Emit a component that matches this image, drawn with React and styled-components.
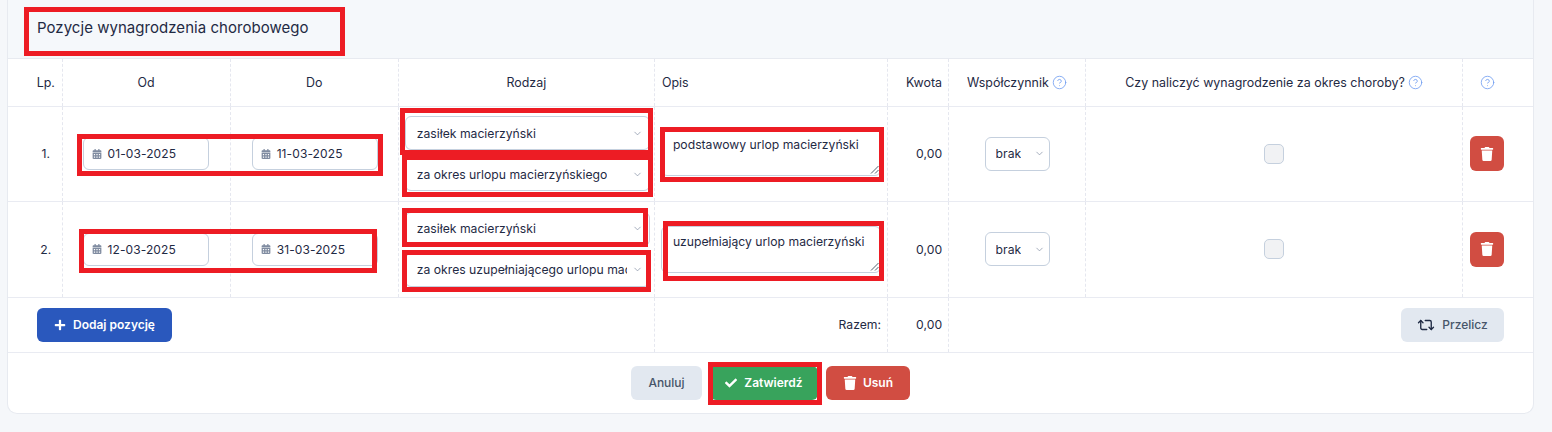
import React from 'react';
import styled, { createGlobalStyle } from 'styled-components';
import { FaCalendarAlt, FaTrash, FaCheck, FaPlus } from 'react-icons/fa';
import { ChevronDown, CircleHelp, Repeat2 } from 'lucide-react';

const GlobalStyle = createGlobalStyle`
	html, body {
		margin: 0;
		padding: 0;
		background: #f5f7fa;
		font-family: Inter, 'Liberation Sans', sans-serif;
		color: #1f2a44;
	}
	* {
		box-sizing: border-box;
	}
`;

const rows = [
	{
		lp: '1.',
		from: '01-03-2025',
		to: '11-03-2025',
		kind: 'zasiłek macierzyński',
		period: 'za okres urlopu macierzyńskiego',
		note: 'podstawowy urlop macierzyński',
		height: 95,
		notePad: '0 6px 2px',
	},
	{
		lp: '2.',
		from: '12-03-2025',
		to: '31-03-2025',
		kind: 'zasiłek macierzyński',
		period: 'za okres uzupełniającego urlopu macierzyńskiego',
		note: 'uzupełniający urlop macierzyński',
		height: 96,
		notePad: '1px 6px 0',
	},
];

const marks = [
	{ x: 24, y: 7, w: 321, h: 49 },
	{ x: 77, y: 134, w: 306, h: 42 },
	{ x: 400, y: 108, w: 253, h: 47 },
	{ x: 402, y: 155, w: 251, h: 42 },
	{ x: 660, y: 127, w: 224, h: 55 },
	{ x: 79, y: 229, w: 298, h: 44 },
	{ x: 402, y: 208, w: 246, h: 39 },
	{ x: 402, y: 250, w: 249, h: 42 },
	{ x: 663, y: 221, w: 221, h: 60 },
	{ x: 708, y: 362, w: 114, h: 43 },
];

const Help = () => (
	<HelpIcon>
		<CircleHelp size={15} strokeWidth={1.3} />
	</HelpIcon>
);

const DateField = ({ value }) => (
	<DateBox>
		<FaCalendarAlt size={10} />
		<span>{value}</span>
	</DateBox>
);

const Select = ({ value, small }) => (
	<SelectBox $small={small}>
		<SelectText>{value}</SelectText>
		<ChevronDown size={11} strokeWidth={1.5} />
	</SelectBox>
);

const App = () => (
	<Page>
		<GlobalStyle />
		<Card>
			<Header>Pozycje wynagrodzenia chorobowego</Header>
			<Table>
				<colgroup>
					<col width="54" />
					<col width="168" />
					<col width="168" />
					<col width="256" />
					<col width="233" />
					<col width="61" />
					<col width="137" />
					<col width="377" />
					<col width="70" />
				</colgroup>
				<thead>
					<tr>
						<Th $pad="0 0 0 22px">Lp.</Th>
						<Th>Od</Th>
						<Th>Do</Th>
						<Th>Rodzaj</Th>
						<Th $align="left" $pad="0 7px">
							Opis
						</Th>
						<Th $align="right">Kwota</Th>
						<Th>
							Współczynnik <Help />
						</Th>
						<Th>
							Czy naliczyć wynagrodzenie za okres choroby? <Help />
						</Th>
						<Th $pad="0 22px 0 0">
							<Help />
						</Th>
					</tr>
				</thead>
				<tbody>
					{rows.map((row) => (
						<tr key={row.lp}>
							<Td $h={row.height} $align="center" $pad="0 0 0 22px">
								{row.lp}
							</Td>
							<Td $h={row.height} $pad="0 0 0 20px">
								<DateField value={row.from} />
							</Td>
							<Td $h={row.height} $pad="0 0 0 21px">
								<DateField value={row.to} />
							</Td>
							<Td $h={row.height} $pad="0 4px 0 6px">
								<SelectStack>
									<Select value={row.kind} />
									<Select value={row.period} />
								</SelectStack>
							</Td>
							<Td $h={row.height} $pad={row.notePad}>
								<Note>
									{row.note}
									<Grip viewBox="0 0 9 9">
										<path d="M1 8.5 8.5 1M5 8.5 8.5 5" />
									</Grip>
								</Note>
							</Td>
							<Td $h={row.height} $align="right">
								0,00
							</Td>
							<Td $h={row.height} $align="center">
								<Select value="brak" small />
							</Td>
							<Td $h={row.height} $align="center">
								<Check />
							</Td>
							<Td $h={row.height} $align="center" $pad="0 22px 0 0">
								<IconButton>
									<FaTrash size={14} />
								</IconButton>
							</Td>
						</tr>
					))}
					<tr>
						<FootTd colSpan={4} $pad="0 0 0 29px">
							<Button $bg="#2a58bd" $color="#fff" $w="135px" $bold>
								<FaPlus size={12} />
								Dodaj pozycję
							</Button>
						</FootTd>
						<FootTd $align="right" $line>
							Razem:
						</FootTd>
						<FootTd $align="right" $line>
							0,00
						</FootTd>
						<FootTd colSpan={3} $align="right" $pad="0 29px 0 0" $line>
							<Button $bg="#e2e8f0" $color="#475569" $w="103px">
								<Repeat2 size={18} color="#1f2a44" strokeWidth={1.8} />
								Przelicz
							</Button>
						</FootTd>
					</tr>
				</tbody>
			</Table>
			<Actions>
				<Button $bg="#e2e8f0" $color="#475569" $w="71px">
					Anuluj
				</Button>
				<Button $bg="#38a35c" $color="#fff" $w="108px" $bold>
					<FaCheck size={12} />
					Zatwierdź
				</Button>
				<Button $bg="#d14d42" $color="#fff" $w="84px" $bold $gap="6px">
					<FaTrash size={14} />
					Usuń
				</Button>
			</Actions>
		</Card>
		{marks.map((m) => (
			<Mark key={`${m.x}-${m.y}`} $x={m.x} $y={m.y} $w={m.w} $h={m.h} />
		))}
	</Page>
);

const Page = styled.div`
	position: relative;
	width: 1552px;
	height: 432px;
	padding: 0 19px 0 7px;
	overflow: hidden;
`;

const Card = styled.div`
	width: 1527px;
	height: 414px;
	background: #fff;
	border: 1px solid #e7eaf0;
	border-top: 0;
	border-radius: 0 0 10px 10px;
	overflow: hidden;
`;

const Header = styled.div`
	height: 59px;
	padding: 18px 0 0 29px;
	background: #f5f8fb;
	border-bottom: 1px solid #e7eaf0;
	font-size: 15px;
	line-height: 20px;
	letter-spacing: 0.04px;
`;

const Table = styled.table`
	width: 1525px;
	table-layout: fixed;
	border-collapse: collapse;
	font-size: 12.2px;
`;

const Th = styled.th`
	height: 47px;
	padding: ${(props) => props.$pad || '0 6px'};
	font-size: 12.45px;
	font-weight: 400;
	text-align: ${(props) => props.$align || 'center'};
	border-bottom: 1px solid #e9ebf2;
	border-right: 1px dashed #e5e7ef;
	white-space: nowrap;
	&:last-child {
		border-right: 0;
	}
`;

const Td = styled.td`
	height: ${(props) => props.$h}px;
	padding: ${(props) => props.$pad || '0 6px'};
	text-align: ${(props) => props.$align || 'left'};
	border-bottom: 1px solid #e9ebf2;
	border-right: 1px dashed #e5e7ef;
	vertical-align: middle;
	&:last-child {
		border-right: 0;
	}
`;

const FootTd = styled.td`
	height: 55px;
	padding: ${(props) => props.$pad || '0 6px'};
	text-align: ${(props) => props.$align || 'left'};
	border-bottom: 1px solid #e9ebf2;
	border-left: ${(props) => (props.$line ? '1px dashed #e5e7ef' : '0')};
`;

const HelpIcon = styled.span`
	display: inline-block;
	color: #6f9cf0;
	vertical-align: -3px;
	line-height: 0;
`;

const DateBox = styled.div`
	display: flex;
	align-items: center;
	gap: 6px;
	width: 126px;
	height: 33px;
	padding-left: 8px;
	background: #fff;
	border: 1px solid #c5d0de;
	border-radius: 6px;
	font-size: 12px;
	letter-spacing: 0.1px;
	& > svg {
		color: #7f8ba0;
		flex: none;
	}
`;

const SelectStack = styled.div`
	display: flex;
	flex-direction: column;
	gap: 7px;
`;

const SelectBox = styled.div`
	display: ${(props) => (props.$small ? 'inline-flex' : 'flex')};
	align-items: center;
	justify-content: space-between;
	width: ${(props) => (props.$small ? '65px' : '100%')};
	height: 34px;
	padding: ${(props) => (props.$small ? '0 4px 0 10px' : '0 6px 0 11px')};
	background: #fff;
	border: 1px solid #c5d0de;
	border-radius: 6px;
	vertical-align: middle;
	& > svg {
		color: #7f8ba0;
		flex: none;
	}
`;

const SelectText = styled.span`
	overflow: hidden;
	white-space: nowrap;
	max-width: 210px;
`;

const Note = styled.div`
	position: relative;
	height: 47px;
	padding: 6px 11px;
	background: #fff;
	border: 1px solid #c5d0de;
	border-radius: 6px;
	line-height: 18px;
`;

const Grip = styled.svg`
	position: absolute;
	right: 1px;
	bottom: 1px;
	width: 9px;
	height: 9px;
	fill: none;
	stroke: #55606f;
	stroke-width: 1;
`;

const Check = styled.span`
	display: inline-block;
	width: 20px;
	height: 20px;
	background: #f1f2f4;
	border: 1px solid #c5d0de;
	border-radius: 5px;
	vertical-align: middle;
`;

const IconButton = styled.div`
	display: inline-flex;
	align-items: center;
	justify-content: center;
	width: 34px;
	height: 35px;
	background: #d14d42;
	border-radius: 6px;
	color: #fff;
	vertical-align: middle;
`;

const Button = styled.div`
	display: inline-flex;
	align-items: center;
	justify-content: center;
	gap: ${(props) => props.$gap || '7px'};
	width: ${(props) => props.$w};
	height: 34px;
	background: ${(props) => props.$bg};
	color: ${(props) => props.$color};
	border-radius: 6px;
	font-size: 12px;
	font-weight: ${(props) => (props.$bold ? 600 : 500)};
	vertical-align: middle;
`;

const Actions = styled.div`
	display: flex;
	justify-content: center;
	gap: 8px;
	padding-top: 13px;
`;

const Mark = styled.div`
	position: absolute;
	left: ${(props) => props.$x}px;
	top: ${(props) => props.$y}px;
	width: ${(props) => props.$w}px;
	height: ${(props) => props.$h}px;
	border: 5px solid #ed1c24;
	pointer-events: none;
`;

export default App;
